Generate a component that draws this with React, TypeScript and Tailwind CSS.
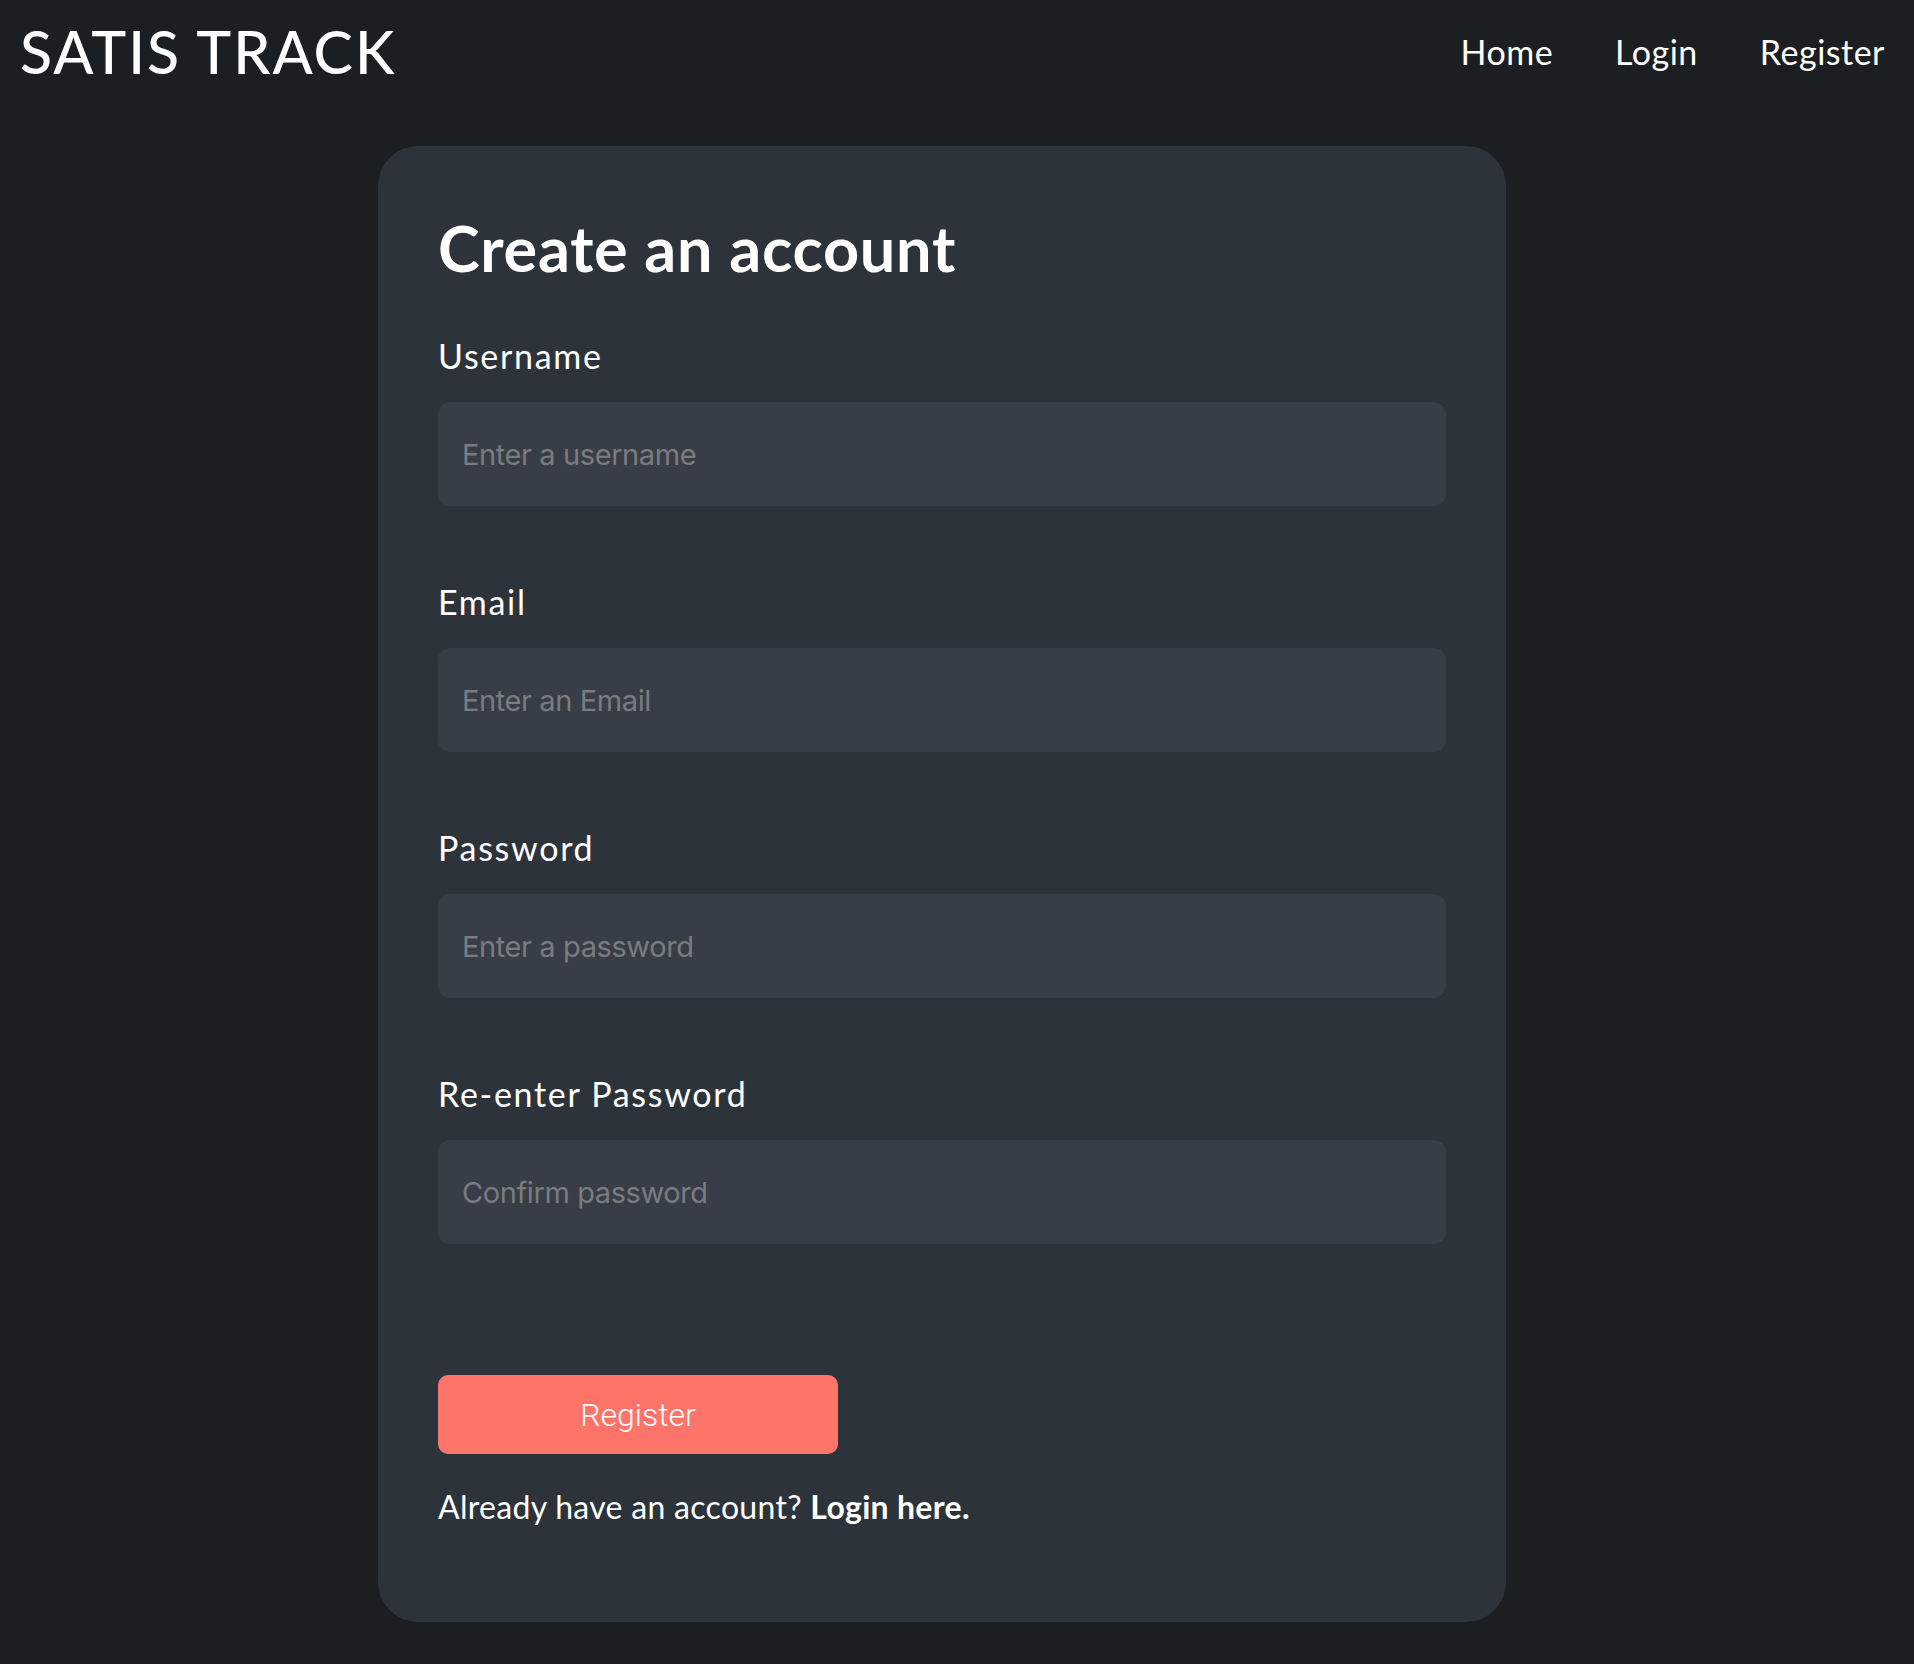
import React, { useState } from "react";

const fields = [
  { label: "Username", placeholder: "Enter a username", type: "text" },
  { label: "Email", placeholder: "Enter an Email", type: "email" },
  { label: "Password", placeholder: "Enter a password", type: "password" },
  { label: "Re-enter Password", placeholder: "Confirm password", type: "password" },
];

const Navbar = () => {
  return (
    <header className="flex h-[102px] items-center justify-between pl-[20px] pr-[29px]">
      <h1 className="text-[59px] font-medium leading-none tracking-[2px] text-white">SATIS TRACK</h1>
      <nav className="flex items-center gap-[62px] text-[34px] tracking-[0.5px] text-white">
        <a href="#">Home</a>
        <a href="#">Login</a>
        <a href="#">Register</a>
      </nav>
    </header>
  );
};

const App = () => {
  const [values, setValues] = useState<{ [key: number]: string }>({});

  return (
    <div className="min-h-screen bg-[#1c1f22] font-['Lato',sans-serif]">
      <Navbar />
      <main className="mt-[44px] pb-[41px]">
        <div className="ml-[378px] w-[1128px] rounded-[40px] bg-[#2d333b] px-[60px] pt-[64px] pb-[96px]">
          <h2 className="text-[63px] font-bold leading-[76px] tracking-[0.7px] text-white">Create an account</h2>

          <form className="mt-[50px]" onSubmit={(e) => e.preventDefault()}>
            {fields.map((field, index) => (
              <div key={index} className={index < fields.length - 1 ? "mb-[76px]" : ""}>
                <label className="block text-[34px] leading-[40px] tracking-[1.7px] text-white">{field.label}</label>
                <input
                  type={field.type}
                  placeholder={field.placeholder}
                  value={values[index] || ""}
                  onChange={(e) => setValues((prev) => ({ ...prev, [index]: e.target.value }))}
                  className="mt-[26px] block h-[104px] w-full rounded-[12px] bg-[#373e47] px-[24px] font-['Inter',sans-serif] text-[29px] tracking-[-0.4px] text-white outline-none placeholder:text-[#7a7c7f]"
                />
              </div>
            ))}

            <button
              type="submit"
              className="mt-[131px] block h-[79px] w-[400px] rounded-[10px] bg-[#ff7468] font-['Roboto',sans-serif] text-[32px] font-light text-white"
            >
              Register
            </button>
          </form>

          <p className="mt-[34px] text-[32px] leading-[38px] tracking-[0.3px] text-white">
            Already have an account? <a href="#" className="font-bold">Login here.</a>
          </p>
        </div>
      </main>
    </div>
  );
};

export default App;
